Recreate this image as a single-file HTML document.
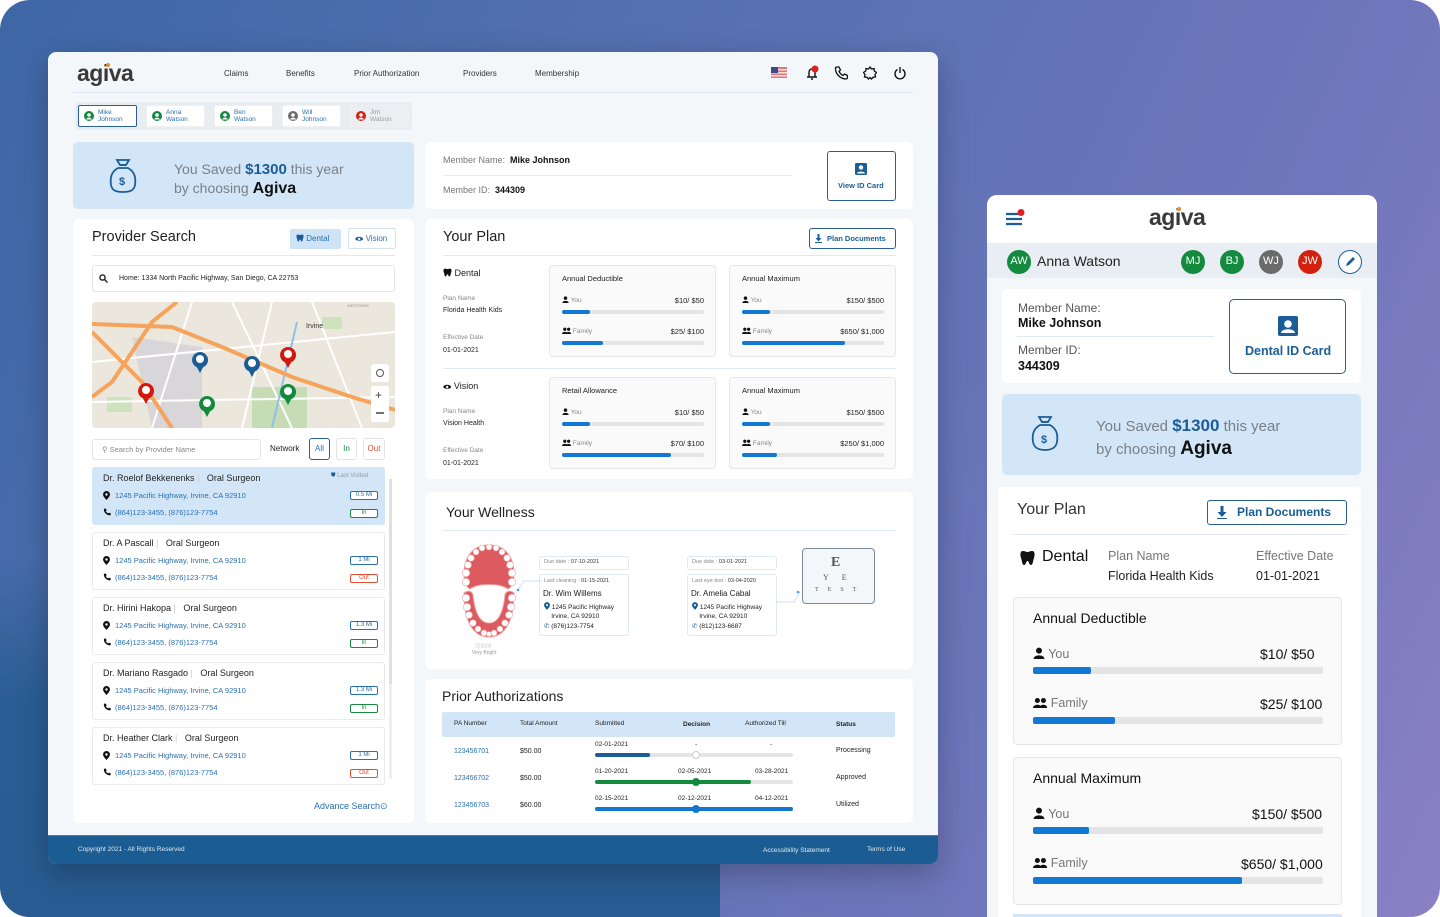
<!DOCTYPE html>
<html><head><meta charset="utf-8">
<style>
*{box-sizing:border-box;margin:0;padding:0}
html,body{width:1440px;height:917px;overflow:hidden;background:#fff;font-family:"Liberation Sans",sans-serif;color:#222}
.bg{position:absolute;left:0;top:0;width:1440px;height:917px;border-radius:30px;overflow:hidden;background:linear-gradient(115deg,#3e67a6 0%,#5a72b2 45%,#7076bb 75%,#8a80c5 100%)}
.bgl{position:absolute;left:0;top:560px;width:720px;height:357px;background:linear-gradient(180deg,rgba(40,90,145,0) 0%,#2a5d93 40%,#285c92 100%)}
.a{position:absolute}
.card{position:absolute;background:#fff;border-radius:6px}
.t{position:absolute;white-space:nowrap}
.main{position:absolute;left:48px;top:52px;width:890px;height:812px;background:#f3f7fa;border-radius:8px;overflow:hidden;box-shadow:0 10px 30px rgba(0,0,0,.25)}
.bar{position:absolute;height:4px;background:#e3e4e6;border-radius:2px}
.bar i{position:absolute;left:0;top:0;height:100%;background:#1377d4;border-radius:2px}
.box{position:absolute;border:1px solid #e4e6e9;border-radius:4px;background:#fafafa}
.badge{position:absolute;width:28px;height:9px;border:1px solid;border-radius:2px;font-size:6px;text-align:center;line-height:7px}
svg.i{vertical-align:-1px}
</style></head><body>
<div class="bg"><div class="bgl"></div></div>

<div class="main">
 <div class="t" style="left:29px;top:8px;font-size:23px;font-weight:bold;color:#3a3a3a;letter-spacing:-0.5px">agiva</div>
 <div class="a" style="left:58px;top:11px;width:4px;height:4px;border-radius:2px;background:#f08a24"></div>
 <div class="t" style="left:176px;top:17px;font-size:8px;color:#333">Claims</div>
 <div class="t" style="left:238px;top:17px;font-size:8px;color:#333">Benefits</div>
 <div class="t" style="left:306px;top:17px;font-size:8px;color:#333">Prior Authorization</div>
 <div class="t" style="left:415px;top:17px;font-size:8px;color:#333">Providers</div>
 <div class="t" style="left:487px;top:17px;font-size:8px;color:#333">Membership</div>
 <svg class="a" style="left:723px;top:15px" width="16" height="11"><rect width="16" height="11" fill="#e07a7a"/><rect y="2" width="16" height="1.5" fill="#f4dede"/><rect y="5" width="16" height="1.5" fill="#f4dede"/><rect y="8" width="16" height="1.5" fill="#f4dede"/><rect width="7" height="6" fill="#3a4a8a"/></svg>
 <svg class="a" style="left:756px;top:13px" width="16" height="16" fill="none" stroke="#111" stroke-width="1.4"><path d="M3 12h10M5 12V7a3 3 0 0 1 6 0v5M7 14h2"/><circle cx="11" cy="4" r="3.5" fill="#e02020" stroke="none"/></svg>
 <svg class="a" style="left:786px;top:14px" width="14" height="14" fill="none" stroke="#111" stroke-width="1.3"><path d="M3 1l2 0 1.5 3-1.5 1.5c1 2 2 3 4 4l1.5-1.5 3 1.5v2c0 1-1 1.5-2 1.5C6 12.5 1.5 8 1.5 2.5 1.5 1.5 2 1 3 1z"/></svg>
 <svg class="a" style="left:815px;top:14px" width="14" height="14" fill="none" stroke="#111" stroke-width="1.3"><path d="M7 1l1.5 2 2.5-.5.3 2.5 2.2 1.5-1.5 2 .5 2.5-2.5.3L8.5 13 7 11.5 5.5 13 4 11.3l-2.5-.3L2 8.5.5 6.5 2.7 5 3 2.5l2.5.5z"/></svg>
 <svg class="a" style="left:845px;top:14px" width="14" height="14" fill="none" stroke="#111" stroke-width="1.4"><path d="M4.5 3.5a5 5 0 1 0 5 0M7 1v6"/></svg>
 <div class="a" style="left:25px;top:40px;width:840px;height:1px;background:#dbe8f4"></div>
 <div class="a" style="left:27px;top:50px;width:337px;height:28px;background:#e8edf1;border-radius:3px"></div>
 <div id="tabs"></div>
 <div class="a" style="left:25px;top:90px;width:341px;height:67px;background:#d3e6f8;border-radius:5px"></div>
 <svg class="a" style="left:60px;top:106px" width="30" height="36" fill="none" stroke="#1b5d96" stroke-width="1.8"><path d="M9 2h12l-3 5h-6z"/><path d="M12 7h6M10 10C3 14 2 20 3 27c1 5 4 7 12 7s11-2 12-7c1-7 0-13-7-17z"/><text x="11" y="27" font-size="11" fill="#1b5d96" stroke="none" font-weight="bold" font-family="Liberation Sans">$</text></svg>
 <div class="t" style="left:126px;top:109px;font-size:14px;color:#7a7f86">You Saved <b style="color:#1b5d96;font-size:15px">$1300</b> this year</div>
 <div class="t" style="left:126px;top:128px;font-size:14px;color:#7a7f86">by choosing <b style="color:#111;font-size:16px">Agiva</b></div>
 <div class="card" style="left:377px;top:90px;width:488px;height:67px"></div>
 <div class="t" style="left:395px;top:103px;font-size:9px;color:#777">Member Name:&nbsp; <b style="color:#111">Mike Johnson</b></div>
 <div class="a" style="left:395px;top:123px;width:350px;height:1px;background:#e6eef5"></div>
 <div class="t" style="left:395px;top:133px;font-size:9px;color:#777">Member ID:&nbsp; <b style="color:#111">344309</b></div>
 <div class="a" style="left:779px;top:99px;width:69px;height:50px;border:1px solid #2a5f95;border-radius:3px"></div>
 <svg class="a" style="left:807px;top:111px" width="12" height="12"><rect width="12" height="12" rx="1.5" fill="#1b5d96"/><circle cx="6" cy="4.5" r="2.2" fill="#fff"/><path d="M2 10.5c0-2.5 8-2.5 8 0z" fill="#fff"/></svg>
 <div class="t" style="left:790px;top:129px;font-size:7.5px;color:#1b5d96;font-weight:bold">View ID Card</div>

 <div class="card" style="left:25px;top:167px;width:341px;height:604px"></div>
 <div class="t" style="left:44px;top:177px;font-size:14.5px;color:#222">Provider Search</div>
 <div class="a" style="left:242px;top:177px;width:51px;height:20px;background:#cfe3f6;border-radius:2px"></div>
 <div class="t" style="left:248px;top:182px;font-size:8px;color:#2a6fb0"><span class="tooth7"></span> Dental</div>
 <div class="a" style="left:300px;top:176px;width:48px;height:21px;border:1px solid #d6e4f0;border-radius:2px"></div>
 <div class="t" style="left:307px;top:182px;font-size:8px;color:#2a6fb0"><span class="eye7"></span> Vision</div>
 <div class="a" style="left:44px;top:203px;width:303px;height:1px;background:#dde9f4"></div>
 <div class="a" style="left:44px;top:213px;width:303px;height:27px;border:1px solid #e3e6ea;border-radius:3px"></div>
 <svg class="a" style="left:51px;top:222px" width="9" height="9" fill="none" stroke="#222" stroke-width="1.4"><circle cx="3.5" cy="3.5" r="2.6"/><path d="M5.5 5.5l3 3"/></svg>
 <div class="t" style="left:71px;top:223px;font-size:7px;color:#222">Home: 1334 North Pacific Highway, San Diego, CA 22753</div>
 <svg class="a" style="left:44px;top:250px;border-radius:4px" width="303" height="126" viewBox="0 0 303 126">
  <rect width="303" height="126" fill="#ece7dc"/>
  <path d="M40 35 L110 45 L110 126 L60 126 Z" fill="#d9d6da"/>
  <rect x="160" y="85" width="55" height="41" fill="#c6dcb4"/>
  <rect x="230" y="15" width="20" height="12" fill="#cfe2bd"/>
  <rect x="15" y="95" width="25" height="15" fill="#cfe2bd"/>
  <g stroke="#fff" stroke-width="2" fill="none"><path d="M0 60 L303 30"/><path d="M100 0 L60 126"/><path d="M180 0 L150 126"/><path d="M220 0 L270 126"/><path d="M0 100 L303 95"/><path d="M140 0 L200 126"/></g>
  <path d="M205 20 L180 126" stroke="#8ec1e8" stroke-width="2" fill="none"/>
  <g stroke="#f6a35c" stroke-width="4" fill="none"><path d="M0 22 L80 25 L130 45 L200 75 L260 95 L303 108"/><path d="M0 30 L50 80 L80 126"/><path d="M85 0 L60 20 L20 80 L0 95"/></g>
  <text x="214" y="26" font-size="7" font-family="Liberation Sans" fill="#333">Irvine</text>
  <text x="255" y="5" font-size="4" font-family="Liberation Sans" fill="#999">WESTPARK</text>
  <g><path d="M108 50 a8 8 0 1 0 0.1 0z" fill="#1b5d96"/><path d="M101 58 L108 71 L115 58z" fill="#1b5d96"/><circle cx="108" cy="57" r="4" fill="#fff"/></g>
  <g><path d="M160 54 a8 8 0 1 0 .1 0z" fill="#1b5d96"/><path d="M153 62 L160 75 L167 62z" fill="#1b5d96"/><circle cx="160" cy="61" r="4" fill="#fff"/></g>
  <g><path d="M196 45 a8 8 0 1 0 .1 0z" fill="#d2190f"/><path d="M189 53 L196 66 L203 53z" fill="#d2190f"/><circle cx="196" cy="52" r="4" fill="#fff"/></g>
  <g><path d="M54 81 a8 8 0 1 0 .1 0z" fill="#d2190f"/><path d="M47 89 L54 102 L61 89z" fill="#d2190f"/><circle cx="54" cy="88" r="4" fill="#fff"/></g>
  <g><path d="M115 94 a8 8 0 1 0 .1 0z" fill="#138a3e"/><path d="M108 102 L115 115 L122 102z" fill="#138a3e"/><circle cx="115" cy="101" r="4" fill="#fff"/></g>
  <g><path d="M196 82 a8 8 0 1 0 .1 0z" fill="#138a3e"/><path d="M189 90 L196 103 L203 90z" fill="#138a3e"/><circle cx="196" cy="89" r="4" fill="#fff"/></g>
  <rect x="279" y="62" width="18" height="18" rx="3" fill="#fff"/><circle cx="288" cy="71" r="3.5" fill="none" stroke="#555"/>
  <rect x="279" y="84" width="18" height="36" rx="3" fill="#fff"/><text x="283" y="97" font-size="12" fill="#444" font-family="Liberation Sans">+</text><path d="M284 111h8" stroke="#444" stroke-width="1.5"/>
 </svg>
 <div class="a" style="left:44px;top:387px;width:169px;height:21px;border:1px solid #e3e6ea;border-radius:3px"></div>
 <div class="t" style="left:54px;top:393px;font-size:7.5px;color:#888">⚲ Search by Provider Name</div>
 <div class="t" style="left:222px;top:392px;font-size:8px;color:#222">Network</div>
 <div class="a" style="left:261px;top:386px;width:21px;height:22px;border:1px solid #2a5f95;border-radius:3px;font-size:8px;color:#2a6fb0;text-align:center;line-height:20px">All</div>
 <div class="a" style="left:288px;top:386px;width:21px;height:22px;border:1px solid #e0e4e8;border-radius:3px;font-size:8px;color:#1a8a42;text-align:center;line-height:20px">In</div>
 <div class="a" style="left:315px;top:386px;width:22px;height:22px;border:1px solid #e0e4e8;border-radius:3px;font-size:8px;color:#e05030;text-align:center;line-height:20px">Out</div>
 <div class="a" style="left:341px;top:427px;width:3px;height:300px;background:#eee"></div>
 <div class="a" style="left:341px;top:427px;width:3px;height:205px;background:#e0e0e0"></div>
 <div id="prov"></div>
 <div class="t" style="left:266px;top:749px;font-size:9px;color:#2a6fb0">Advance Search⊙</div>

 <div class="card" style="left:377px;top:167px;width:488px;height:260px"></div>
 <div class="t" style="left:395px;top:177px;font-size:14.5px;color:#222">Your Plan</div>
 <div class="a" style="left:761px;top:176px;width:87px;height:21px;border:1px solid #2a5f95;border-radius:3px"></div>
 <svg class="a" style="left:767px;top:182px" width="7" height="9"><path d="M2.5 0h2v4h2L3.5 7.5 0.5 4h2z M0 8h7v1H0z" fill="#1b5d96"/></svg>
 <div class="t" style="left:779px;top:182px;font-size:7.5px;color:#1b5d96;font-weight:bold">Plan Documents</div>
 <div class="a" style="left:395px;top:203px;width:453px;height:1px;background:#dde9f4"></div>
 <div class="a" style="left:395px;top:316px;width:453px;height:1px;background:#dde9f4"></div>
 <div id="plan"></div>

 <div class="card" style="left:377px;top:440px;width:488px;height:177px"></div>
 <div class="t" style="left:398px;top:452px;font-size:14px;color:#222">Your Wellness</div>
 <div class="a" style="left:395px;top:478px;width:453px;height:1px;background:#dde9f4"></div>
 <svg class="a" style="left:410px;top:491px" width="62" height="96" viewBox="0 0 62 96">
  <path d="M31 2C12 2 6 18 6 30c0 8 2 14 6 16 8-6 30-6 38 0 4-2 6-8 6-16C56 18 50 2 31 2z" fill="#dd5b60" stroke="#f0a0a0"/>
  <path d="M6 50c0 30 10 44 25 44s25-14 25-44c-4-3-8-2-9 2-2 20-8 28-16 28s-14-8-16-28c-1-4-5-5-9-2z" fill="#dd5b60" stroke="#f0a0a0"/>
  <g fill="#fff" stroke="#f0a0a0" stroke-width=".6">
  <circle cx="31" cy="4" r="3"/><circle cx="24" cy="5" r="3"/><circle cx="38" cy="5" r="3"/><circle cx="18" cy="9" r="3"/><circle cx="44" cy="9" r="3"/><circle cx="13" cy="15" r="3.3"/><circle cx="49" cy="15" r="3.3"/><circle cx="10" cy="22" r="3.5"/><circle cx="52" cy="22" r="3.5"/><circle cx="8" cy="30" r="3.8"/><circle cx="54" cy="30" r="3.8"/><circle cx="8" cy="39" r="3.8"/><circle cx="54" cy="39" r="3.8"/>
  <circle cx="8" cy="55" r="3.8"/><circle cx="54" cy="55" r="3.8"/><circle cx="9" cy="64" r="3.8"/><circle cx="53" cy="64" r="3.8"/><circle cx="11" cy="72" r="3.5"/><circle cx="51" cy="72" r="3.5"/><circle cx="15" cy="80" r="3.3"/><circle cx="47" cy="80" r="3.3"/><circle cx="20" cy="86" r="3"/><circle cx="42" cy="86" r="3"/><circle cx="26" cy="90" r="3"/><circle cx="36" cy="90" r="3"/><circle cx="31" cy="91" r="2.5"/></g>
 </svg>
 <div class="t" style="left:427px;top:591px;font-size:5px;color:#bbb">▯▯▯▯▯▯</div>
 <div class="t" style="left:424px;top:598px;font-size:5px;color:#999">Very Bright</div>
 <svg class="a" style="left:468px;top:520px" width="26" height="20"><path d="M2 18 L8 9 L26 9" stroke="#cfe0f0" fill="none"/><circle cx="2" cy="18" r="1.3" fill="#5a9ad8"/></svg>
 <div class="a" style="left:491px;top:504px;width:90px;height:14px;border:1px solid #dde9f4;border-radius:3px"></div>
 <div class="t" style="left:496px;top:507px;font-size:5.5px;color:#888">Due date : <span style="color:#333">07-10-2021</span></div>
 <div class="a" style="left:491px;top:522px;width:90px;height:62px;border:1px solid #dde9f4;border-radius:3px"></div>
 <div class="t" style="left:496px;top:526px;font-size:5.5px;color:#888">Last cleaning : <span style="color:#333">01-15-2021</span></div>
 <div class="t" style="left:495px;top:537px;font-size:8px;color:#222">Dr. Wim Willems</div>
 <div class="t" style="left:496px;top:550px;font-size:6.5px;color:#222;line-height:8.5px"><span class="pin"></span> 1245 Pacific Highway<br>&nbsp;&nbsp;&nbsp; Irvine, CA 92910</div>
 <div class="t" style="left:496px;top:570px;font-size:6.5px;color:#222"><span style="color:#1b5d96">✆</span> (876)123-7754</div>
 <div class="a" style="left:639px;top:504px;width:90px;height:14px;border:1px solid #dde9f4;border-radius:3px"></div>
 <div class="t" style="left:644px;top:507px;font-size:5.5px;color:#888">Due date : <span style="color:#333">03-01-2021</span></div>
 <div class="a" style="left:639px;top:522px;width:90px;height:62px;border:1px solid #dde9f4;border-radius:3px"></div>
 <div class="t" style="left:644px;top:526px;font-size:5.5px;color:#888">Last eye test : <span style="color:#333">03-04-2020</span></div>
 <div class="t" style="left:643px;top:537px;font-size:8px;color:#222">Dr. Amelia Cabal</div>
 <div class="t" style="left:644px;top:550px;font-size:6.5px;color:#222;line-height:8.5px"><span class="pin"></span> 1245 Pacific Highway<br>&nbsp;&nbsp;&nbsp; Irvine, CA 92910</div>
 <div class="t" style="left:644px;top:570px;font-size:6.5px;color:#222"><span style="color:#1b5d96">✆</span> (812)123-6687</div>
 <svg class="a" style="left:728px;top:534px" width="26" height="20"><path d="M0 16 L18 16 L24 6" stroke="#cfe0f0" fill="none"/><circle cx="22" cy="6" r="1.3" fill="#5a9ad8"/></svg>
 <div class="a" style="left:754px;top:496px;width:73px;height:56px;border:1.5px solid #7a8a9a;border-radius:4px;background:#f4f7fa"></div>
 <div class="t" style="left:783px;top:503px;font-size:14px;color:#555;font-family:'Liberation Serif',serif;font-weight:bold">E</div>
 <div class="t" style="left:775px;top:521px;font-size:8px;color:#555;font-family:'Liberation Serif',serif;letter-spacing:13px">YE</div>
 <div class="t" style="left:767px;top:535px;font-size:6px;color:#555;font-family:'Liberation Serif',serif;letter-spacing:9px">TEST</div>

 <div class="card" style="left:377px;top:627px;width:488px;height:144px"></div>
 <div class="t" style="left:394px;top:636px;font-size:14px;color:#222">Prior Authorizations</div>
 <div class="a" style="left:394px;top:660px;width:453px;height:25px;background:#d3e6f8;border-radius:2px"></div>
 <div class="t" style="left:406px;top:668px;font-size:6.5px;color:#222">PA Number</div>
 <div class="t" style="left:472px;top:668px;font-size:6.5px;color:#222">Total Amount</div>
 <div class="t" style="left:547px;top:668px;font-size:6.5px;color:#222">Submitted</div>
 <div class="t" style="left:635px;top:669px;font-size:6.5px;color:#222;font-weight:bold">Decision</div>
 <div class="t" style="left:697px;top:668px;font-size:6.5px;color:#222">Authorized Till</div>
 <div class="t" style="left:788px;top:669px;font-size:6.5px;color:#222;font-weight:bold">Status</div>
 <div id="pa"></div>

 <div class="a" style="left:0;top:783px;width:890px;height:29px;background:#1b5d92;border-top:1px solid #3f7fb4"></div>
 <div class="t" style="left:30px;top:794px;font-size:6.5px;color:#dfe9f3">Copyright 2021 - All Rights Reserved</div>
 <div class="t" style="left:715px;top:795px;font-size:6.5px;color:#dfe9f3">Accessibility Statement</div>
 <div class="t" style="left:819px;top:794px;font-size:6.5px;color:#dfe9f3">Terms of Use</div>
</div>

<div class="a" style="left:987px;top:195px;width:390px;height:722px;background:#f3f7fa;border-radius:10px 10px 0 0;overflow:hidden">
 <div class="a" style="left:0;top:0;width:390px;height:48px;background:#fff"></div>
 <svg class="a" style="left:18px;top:14px" width="22" height="18"><g stroke="#1b5d96" stroke-width="2.2"><path d="M1 5h16M1 10h16M1 15h16"/></g><circle cx="16" cy="3.5" r="3.5" fill="#e02020"/></svg>
 <div class="t" style="left:162px;top:9px;font-size:23px;font-weight:bold;color:#3a3a3a;letter-spacing:-0.5px">agiva</div>
 <div class="a" style="left:190px;top:12px;width:4px;height:4px;border-radius:2px;background:#f08a24"></div>
 <div class="a" style="left:0;top:48px;width:390px;height:35px;background:#e8eef3"></div>
 <div class="a" style="left:20px;top:55px;width:24px;height:24px;border-radius:12px;background:#138a3e;color:#fff;font-size:11px;text-align:center;line-height:23px">AW</div>
 <div class="t" style="left:50px;top:58px;font-size:14px;color:#222">Anna Watson</div>
 <div class="a" style="left:194px;top:55px;width:24px;height:24px;border-radius:12px;background:#138a3e;color:#fff;font-size:11px;text-align:center;line-height:23px">MJ</div>
 <div class="a" style="left:233px;top:55px;width:24px;height:24px;border-radius:12px;background:#138a3e;color:#fff;font-size:11px;text-align:center;line-height:23px">BJ</div>
 <div class="a" style="left:272px;top:55px;width:24px;height:24px;border-radius:12px;background:#6b6b6b;color:#fff;font-size:11px;text-align:center;line-height:23px">WJ</div>
 <div class="a" style="left:311px;top:55px;width:24px;height:24px;border-radius:12px;background:#d4200f;color:#fff;font-size:11px;text-align:center;line-height:23px">JW</div>
 <div class="a" style="left:351px;top:55px;width:24px;height:24px;border-radius:12px;border:1.5px solid #1b5d96;background:#fff"></div>
 <svg class="a" style="left:357px;top:61px" width="12" height="12"><path d="M2 10l1-3 6-6 2 2-6 6z" fill="#1b5d96"/></svg>
 <div class="card" style="left:15px;top:94px;width:359px;height:94px"></div>
 <div class="t" style="left:31px;top:106px;font-size:12px;color:#555">Member Name:</div>
 <div class="t" style="left:31px;top:121px;font-size:12.5px;color:#111;font-weight:bold">Mike Johnson</div>
 <div class="a" style="left:30px;top:141px;width:197px;height:1px;background:#dde9f4"></div>
 <div class="t" style="left:31px;top:148px;font-size:12px;color:#555">Member ID:</div>
 <div class="t" style="left:31px;top:164px;font-size:12.5px;color:#111;font-weight:bold">344309</div>
 <div class="a" style="left:242px;top:104px;width:117px;height:75px;border:1.5px solid #2a5f95;border-radius:5px;background:#fff"></div>
 <svg class="a" style="left:291px;top:121px" width="20" height="20"><rect width="20" height="20" rx="2" fill="#1b5d96"/><circle cx="10" cy="8" r="3.8" fill="#fff"/><path d="M3 17c0-5 14-5 14 0z" fill="#fff"/></svg>
 <div class="t" style="left:258px;top:149px;font-size:12.5px;color:#1b5d96;font-weight:bold">Dental ID Card</div>
 <div class="a" style="left:15px;top:199px;width:359px;height:81px;background:#d3e6f8;border-radius:5px"></div>
 <svg class="a" style="left:44px;top:220px" width="28" height="38" fill="none" stroke="#1b5d96" stroke-width="1.8"><path d="M8 2h12l-3 5h-6z"/><path d="M11 7h6M9 10C2 14 1 20 2 27c1 5 4 8 12 8s11-3 12-8c1-7 0-13-7-17z"/><text x="10" y="28" font-size="11" fill="#1b5d96" stroke="none" font-weight="bold" font-family="Liberation Sans">$</text></svg>
 <div class="t" style="left:109px;top:221px;font-size:15px;color:#7a7f86">You Saved <b style="color:#1b5d96;font-size:17px">$1300</b> this year</div>
 <div class="t" style="left:109px;top:243px;font-size:15px;color:#7a7f86">by choosing <b style="color:#111;font-size:19px">Agiva</b></div>
 <div class="a" style="left:11px;top:292px;width:363px;height:440px;background:#fff;border-radius:5px"></div>
 <div class="t" style="left:30px;top:306px;font-size:16px;color:#333">Your Plan</div>
 <div class="a" style="left:220px;top:305px;width:140px;height:25px;border:1.5px solid #2a5f95;border-radius:3px"></div>
 <svg class="a" style="left:230px;top:311px" width="10" height="13"><path d="M3.5 0h3v6h3L5 11 0.5 6h3z M0 12h10v1H0z" fill="#1b5d96"/></svg>
 <div class="t" style="left:250px;top:310px;font-size:12px;color:#1b5d96;font-weight:bold">Plan Documents</div>
 <div class="a" style="left:26px;top:339px;width:334px;height:1px;background:#dde9f4"></div>
 <svg class="a" style="left:33px;top:355px" width="15" height="16"><path d="M3 1C0 1 0 5 1 8c1 2 1 7 3 7s2-4 3.5-4S9 15 11 15s2-5 3-7c1-3 1-7-2-7-2 0-3 1-4.5 1S5 1 3 1z" fill="#111"/></svg>
 <div class="t" style="left:55px;top:353px;font-size:16px;color:#111">Dental</div>
 <div class="t" style="left:121px;top:354px;font-size:12.5px;color:#777">Plan Name</div>
 <div class="t" style="left:121px;top:374px;font-size:12.5px;color:#222">Florida Health Kids</div>
 <div class="t" style="left:269px;top:354px;font-size:12.5px;color:#777">Effective Date</div>
 <div class="t" style="left:269px;top:374px;font-size:12.5px;color:#222">01-01-2021</div>
 <div class="box" style="left:26px;top:402px;width:329px;height:148px"></div>
 <div class="t" style="left:46px;top:415px;font-size:14px;color:#111">Annual Deductible</div>
 <div class="t" style="left:46px;top:452px;font-size:12.5px;color:#777"><span class="p1l"></span> You</div>
 <div class="t" style="left:273px;top:451px;font-size:14px;color:#111">$10/ $50</div>
 <div class="bar" style="left:46px;top:472px;width:290px;height:7px"><i style="width:58px"></i></div>
 <div class="t" style="left:46px;top:501px;font-size:12.5px;color:#777"><span class="p2l"></span> Family</div>
 <div class="t" style="left:273px;top:501px;font-size:14px;color:#111">$25/ $100</div>
 <div class="bar" style="left:46px;top:522px;width:290px;height:7px"><i style="width:82px"></i></div>
 <div class="box" style="left:26px;top:562px;width:329px;height:148px"></div>
 <div class="t" style="left:46px;top:575px;font-size:14px;color:#111">Annual Maximum</div>
 <div class="t" style="left:46px;top:612px;font-size:12.5px;color:#777"><span class="p1l"></span> You</div>
 <div class="t" style="left:265px;top:611px;font-size:14px;color:#111">$150/ $500</div>
 <div class="bar" style="left:46px;top:632px;width:290px;height:7px"><i style="width:56px"></i></div>
 <div class="t" style="left:46px;top:661px;font-size:12.5px;color:#777"><span class="p2l"></span> Family</div>
 <div class="t" style="left:254px;top:661px;font-size:14px;color:#111">$650/ $1,000</div>
 <div class="bar" style="left:46px;top:682px;width:290px;height:7px"><i style="width:209px"></i></div>
 <div class="a" style="left:26px;top:719px;width:329px;height:10px;background:#d3e6f8"></div>
</div>

<script>
function P1(s){return '<svg class="i" width="'+s+'" height="'+s+'" viewBox="0 0 10 10"><circle cx="5" cy="3" r="2.5" fill="#111"/><path d="M0.5 10c0-4 9-4 9 0z" fill="#111"/></svg>';}
function P2(s){return '<svg class="i" width="'+(s*1.3)+'" height="'+s+'" viewBox="0 0 13 10"><circle cx="4" cy="3.2" r="2.3" fill="#111"/><circle cx="9.5" cy="3.2" r="2.3" fill="#111"/><path d="M0 10c0-4 8-4 8 0zM6 10c0-4 7-4 7 0z" fill="#111"/></svg>';}
function TOOTH(s,c){return '<svg class="i" width="'+s+'" height="'+s+'" viewBox="0 0 15 16"><path d="M3 1C0 1 0 5 1 8c1 2 1 7 3 7s2-4 3.5-4S9 15 11 15s2-5 3-7c1-3 1-7-2-7-2 0-3 1-4.5 1S5 1 3 1z" fill="'+c+'"/></svg>';}
function EYE(s,c){return '<svg class="i" width="'+(s*1.4)+'" height="'+s+'" viewBox="0 0 14 10"><path d="M0 5C3 0 11 0 14 5 11 9 3 9 0 5z" fill="'+c+'"/><circle cx="7" cy="5" r="2" fill="#fff"/></svg>';}
var PIN='<svg class="i" width="6" height="8" viewBox="0 0 7 9"><path d="M3.5 0a3.5 3.5 0 0 1 3.5 3.5c0 2-3.5 5.5-3.5 5.5S0 5.5 0 3.5A3.5 3.5 0 0 1 3.5 0z" fill="#1b5d96"/><circle cx="3.5" cy="3.5" r="1.2" fill="#fff"/></svg>';
document.querySelectorAll('.p1l').forEach(function(e){e.outerHTML=P1(12)});
document.querySelectorAll('.p2l').forEach(function(e){e.outerHTML=P2(11)});
document.querySelectorAll('.tooth7').forEach(function(e){e.outerHTML=TOOTH(8,'#1b5d96')});
document.querySelectorAll('.eye7').forEach(function(e){e.outerHTML=EYE(6,'#1b5d96')});
document.querySelectorAll('.pin').forEach(function(e){e.outerHTML=PIN});
var tabs=[["Mike","Johnson","#138a3e",1],["Anna","Watson","#138a3e",0],["Ben","Watson","#138a3e",0],["Will","Johnson","#6b6b6b",0],["Jim","Watson","#d4200f",0]];
var h="";tabs.forEach(function(t,i){var x=30+i*68;
h+='<div class="a" style="left:'+x+'px;top:53px;width:59px;height:22px;background:'+(i==4?'#eceff2':'#fff')+';border:1px solid '+(t[3]?'#2a5f95':'#f0f0f0')+';border-radius:2px"></div>';
h+='<svg class="a" style="left:'+(x+6)+'px;top:59px" width="10" height="10"><circle cx="5" cy="5" r="5" fill="'+t[2]+'"/><circle cx="5" cy="4" r="1.8" fill="#fff"/><path d="M2 8.5c1-2.5 5-2.5 6 0" fill="#fff"/></svg>';
h+='<div class="t" style="left:'+(x+20)+'px;top:57px;font-size:6.5px;line-height:7px;color:'+(i==4?'#999':'#2a6fb0')+'">'+t[0]+'<br>'+t[1]+'</div>';});
document.getElementById("tabs").outerHTML=h;
var pr=[["Dr. Roelof Bekkenenks","0.5 Mi","In"],["Dr. A Pascall","1 Mi","Out"],["Dr. Hirini Hakopa","1.3 Mi","In"],["Dr. Mariano Rasgado","1.3 Mi","In"],["Dr. Heather Clark","1 Mi","Out"]];
h="";pr.forEach(function(p,i){var y=415+i*65;
h+='<div class="a" style="left:44px;top:'+y+'px;width:293px;height:58px;border-radius:3px;'+(i==0?'background:#d3e6f8':'border:1px solid #e8eaed')+'"></div>';
h+='<div class="t" style="left:55px;top:'+(y+6)+'px;font-size:9px;color:#222">'+p[0]+' <span style="color:#ccc">|</span>&nbsp;&nbsp; Oral Surgeon</div>';
if(i==0)h+='<div class="t" style="left:283px;top:'+(y+6)+'px;font-size:6px;color:#999"><span style="color:#1b5d96">⛊</span> Last Visited</div>';
h+='<svg class="a" style="left:55px;top:'+(y+24)+'px" width="7" height="9"><path d="M3.5 0a3.5 3.5 0 0 1 3.5 3.5c0 2-3.5 5.5-3.5 5.5S0 5.5 0 3.5A3.5 3.5 0 0 1 3.5 0z" fill="#111"/><circle cx="3.5" cy="3.5" r="1.2" fill="#fff"/></svg>';
h+='<div class="t" style="left:67px;top:'+(y+24)+'px;font-size:7.5px;color:#2a6fb0">1245 Pacific Highway, Irvine, CA 92910</div>';
h+='<svg class="a" style="left:55px;top:'+(y+41)+'px" width="8" height="8" viewBox="0 0 14 14"><path d="M3 1l2 0 1.5 3-1.5 1.5c1 2 2 3 4 4l1.5-1.5 3 1.5v2c0 1-1 1.5-2 1.5C6 12.5 1.5 8 1.5 2.5 1.5 1.5 2 1 3 1z" fill="#111"/></svg>';
h+='<div class="t" style="left:67px;top:'+(y+41)+'px;font-size:7.5px;color:#2a6fb0">(864)123-3455, (876)123-7754</div>';
h+='<div class="badge" style="left:302px;top:'+(y+24)+'px;border-color:#2a6fb0;color:#2a6fb0;background:#fff">'+p[1]+'</div>';
var c=p[2]=="In"?"#1a8a42":"#e05030";
h+='<div class="badge" style="left:302px;top:'+(y+42)+'px;border-color:'+c+';color:'+c+';background:#fff">'+p[2]+'</div>';});
document.getElementById("prov").outerHTML=h;
function box(x,y,title,a,b,wa,wb){var s='<div class="box" style="left:'+x+'px;top:'+y+'px;width:167px;height:92px"></div>';
s+='<div class="t" style="left:'+(x+13)+'px;top:'+(y+9)+'px;font-size:7.5px;color:#222">'+title+'</div>';
s+='<div class="t" style="left:'+(x+13)+'px;top:'+(y+31)+'px;font-size:6.5px;color:#888">'+P1(7)+' You</div>';
s+='<div class="t" style="left:'+(x+13)+'px;top:'+(y+31)+'px;width:142px;text-align:right;font-size:7.5px;color:#222">'+a+'</div>';
s+='<div class="bar" style="left:'+(x+13)+'px;top:'+(y+45)+'px;width:142px"><i style="width:'+wa+'px"></i></div>';
s+='<div class="t" style="left:'+(x+13)+'px;top:'+(y+62)+'px;font-size:6.5px;color:#888">'+P2(7)+' Family</div>';
s+='<div class="t" style="left:'+(x+13)+'px;top:'+(y+62)+'px;width:142px;text-align:right;font-size:7.5px;color:#222">'+b+'</div>';
s+='<div class="bar" style="left:'+(x+13)+'px;top:'+(y+76)+'px;width:142px"><i style="width:'+wb+'px"></i></div>';return s;}
function sec(y,name,pn){return '<div class="t" style="left:395px;top:'+y+'px;font-size:9px;color:#222">'+name+'</div>'+
'<div class="t" style="left:395px;top:'+(y+27)+'px;font-size:6.5px;color:#888">Plan Name</div>'+
'<div class="t" style="left:395px;top:'+(y+39)+'px;font-size:7px;color:#222">'+pn+'</div>'+
'<div class="t" style="left:395px;top:'+(y+66)+'px;font-size:6.5px;color:#888">Effective Date</div>'+
'<div class="t" style="left:395px;top:'+(y+79)+'px;font-size:7px;color:#222">01-01-2021</div>';}
h=sec(216,TOOTH(9,'#111')+" Dental","Florida Health Kids")+sec(329,EYE(6,'#111')+" Vision","Vision Health");
h+=box(501,213,"Annual Deductible","$10/ $50","$25/ $100",28,41);
h+=box(681,213,"Annual Maximum","$150/ $500","$650/ $1,000",28,103);
h+=box(501,325,"Retail Allowance","$10/ $50","$70/ $100",28,109);
h+=box(681,325,"Annual Maximum","$150/ $500","$250/ $1,000",28,35);
document.getElementById("plan").outerHTML=h;
var pa=[["123456701","$50.00","02-01-2021","-","-","Processing","#1b5d96",55,"#fff"],["123456702","$50.00","01-20-2021","02-05-2021","03-28-2021","Approved","#138a3e",156,"#138a3e"],["123456703","$60.00","02-15-2021","02-12-2021","04-12-2021","Utilized","#1377d4",198,"#1377d4"]];
h="";pa.forEach(function(p,i){var y=694+i*27;
h+='<div class="t" style="left:406px;top:'+(y+2)+'px;font-size:7px;color:#2a6fb0">'+p[0]+'</div>';
h+='<div class="t" style="left:472px;top:'+(y+2)+'px;font-size:7px;color:#222">'+p[1]+'</div>';
h+='<div class="t" style="left:547px;top:'+(y-5)+'px;font-size:6.5px;color:#222">'+p[2]+'</div>';
h+='<div class="t" style="left:'+(p[3]=="-"?647:630)+'px;top:'+(y-5)+'px;font-size:6.5px;color:#222">'+p[3]+'</div>';
h+='<div class="t" style="left:'+(p[4]=="-"?722:707)+'px;top:'+(y-5)+'px;font-size:6.5px;color:#222">'+p[4]+'</div>';
h+='<div class="t" style="left:788px;top:'+(y+1)+'px;font-size:7px;color:#222">'+p[5]+'</div>';
h+='<div class="bar" style="left:547px;top:'+(y+7)+'px;width:198px"><i style="width:'+p[7]+'px;background:'+p[6]+'"></i></div>';
h+='<div class="a" style="left:644px;top:'+(y+5)+'px;width:8px;height:8px;border-radius:4px;background:'+p[8]+';border:1px solid '+(i==0?'#ccc':p[8])+'"></div>';});
document.getElementById("pa").outerHTML=h;
</script>
</body></html>
